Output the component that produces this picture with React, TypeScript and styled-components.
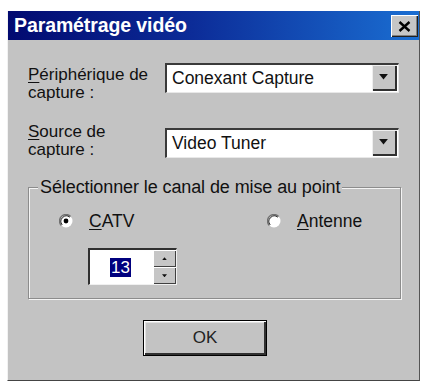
import React from "react";
import styled, { createGlobalStyle } from "styled-components";

const Global = createGlobalStyle`
  html, body { margin: 0; padding: 0; background: #ffffff; }
  body { font-family: "Liberation Sans", Arial, sans-serif; }
`;

const Win = styled.div`
  box-sizing: border-box;
  margin: 11px 0 0 7px;
  width: 413px;
  height: 370px;
  background: #c3c3c3;
  border-left: 1px solid #f2f2f2;
  border-right: 1px solid #555;
  border-bottom: 1px solid #444;
  display: flex;
  flex-direction: column;
`;

const TitleBar = styled.div`
  height: 29px;
  background: linear-gradient(to right, #020a70 0%, #0c2c98 45%, #1a6ed2 100%);
  display: flex;
  align-items: center;
  justify-content: space-between;
  padding: 0 1px 0 6px;
`;

const Title = styled.span`
  color: #fff;
  font-weight: bold;
  font-size: 19.5px;
  letter-spacing: -0.1px;
`;

const CloseBtn = styled.div`
  box-sizing: border-box;
  width: 27px;
  height: 22px;
  margin-top: 1px;
  background: #c6c6c6;
  box-shadow: inset 1px 1px 0 #fff, inset -1px -1px 0 #202020, inset -2px -2px 0 #808080;
  display: flex;
  align-items: center;
  justify-content: center;
`;

const Body = styled.div`
  flex: 1;
  padding: 23px 18px 0 20px;
  display: flex;
  flex-direction: column;
`;

const Row = styled.div<{ $mt?: number }>`
  display: flex;
  align-items: flex-start;
  margin-top: ${(p) => p.$mt ?? 0}px;
`;

const Label = styled.div<{ $mt?: number }>`
  width: 137px;
  margin-top: ${(p) => p.$mt ?? 0}px;
  font-size: 17px;
  line-height: 18px;
  color: #111;
`;

const U = styled.span`
  text-decoration: underline;
  text-underline-offset: 2px;
`;

const Combo = styled.div<{ $mt?: number }>`
  box-sizing: border-box;
  margin-top: ${(p) => p.$mt ?? 0}px;
  width: 234px;
  height: 30px;
  background: #fff;
  border-top: 2px solid #3a3a3a;
  border-left: 2px solid #3a3a3a;
  border-right: 1px solid #e8e8e8;
  border-bottom: 1px solid #e8e8e8;
  display: flex;
  align-items: center;
  justify-content: space-between;
  padding: 0 1px 1px 5px;
`;

const ComboText = styled.span`
  font-size: 17.5px;
  color: #111;
`;

const DropBtn = styled.div`
  box-sizing: border-box;
  width: 25px;
  height: 26px;
  background: #c6c6c6;
  box-shadow: inset 1px 1px 0 #eee, inset -2px -2px 0 #303030;
  display: flex;
  align-items: center;
  justify-content: center;
  padding: 0 2px 2px 0;
`;

const Group = styled.fieldset`
  margin: 18px 0 0 0;
  padding: 14px 0 13px 0;
  border: 1px solid #8c8c8c;
  box-shadow: inset 1px 1px 0 #f4f4f4, 1px 1px 0 #f4f4f4;
  min-width: 0;
`;

const Legend = styled.legend`
  margin-left: 9px;
  padding: 0 2px;
  font-size: 18px;
  line-height: 20px;
  color: #111;
  background: #c3c3c3;
  letter-spacing: -0.1px;
`;

const GroupInner = styled.div`
  padding-left: 30px;
  display: flex;
  flex-direction: column;
`;

const RadioRow = styled.div`
  display: flex;
  align-items: center;
  height: 20px;
`;

const Radio = styled.div<{ $w?: number }>`
  display: flex;
  align-items: center;
  gap: 16px;
  width: ${(p) => (p.$w ? `${p.$w}px` : "auto")};
  font-size: 17.5px;
  color: #111;
`;

const Spin = styled.div`
  box-sizing: border-box;
  margin: 17px 0 0 29px;
  width: 89px;
  height: 37px;
  background: #fff;
  border-top: 2px solid #303030;
  border-left: 2px solid #303030;
  border-right: 1px solid #f0f0f0;
  border-bottom: 1px solid #f0f0f0;
  display: flex;
  align-items: stretch;
`;

const SpinField = styled.div`
  flex: 1;
  display: flex;
  align-items: center;
  padding-left: 20px;
`;

const Sel = styled.span`
  background: #00007e;
  color: #fff;
  font-size: 17px;
  line-height: 19px;
  padding: 0 1px;
`;

const SpinBtns = styled.div`
  width: 23px;
  display: flex;
  flex-direction: column;
`;

const SpinBtn = styled.div`
  flex: 1;
  background: #c6c6c6;
  box-shadow: inset 1px 1px 0 #fff, inset -1px -1px 0 #404040;
  display: flex;
  align-items: center;
  justify-content: center;
`;

const BtnRow = styled.div`
  display: flex;
  margin-top: 21px;
  padding-left: 115px;
`;

const OkBtn = styled.div`
  box-sizing: border-box;
  width: 124px;
  height: 36px;
  border: 1px solid #000;
  background: #c3c3c3;
  box-shadow: inset 1px 1px 0 #fff, inset -2px -2px 0 #303030, inset 2px 2px 0 #e0e0e0;
  display: flex;
  align-items: center;
  justify-content: center;
  font-size: 17px;
  color: #222;
`;

const Arrow = ({ up, size = 9 }: { up?: boolean; size?: number }) => (
  <svg width={size} height={size / 2 + 1} viewBox="0 0 8 5">
    {up ? <polygon points="0,5 8,5 4,0" fill="#111" /> : <polygon points="0,0 8,0 4,5" fill="#111" />}
  </svg>
);

const RadioIcon = ({ checked }: { checked?: boolean }) => (
  <svg width="14" height="14" viewBox="0 0 14 14">
    <circle cx="7" cy="7" r="6.5" fill="#fff" />
    <path d="M2.4 11.6 A6.5 6.5 0 0 1 11.6 2.4" stroke="#707070" strokeWidth="1.4" fill="none" />
    <path d="M3.2 10.8 A5.4 5.4 0 0 1 10.8 3.2" stroke="#202020" strokeWidth="1" fill="none" />
    {checked && <circle cx="7" cy="7" r="2.4" fill="#000" />}
  </svg>
);

export default function App() {
  return (
    <>
      <Global />
      <Win>
        <TitleBar>
          <Title>Paramétrage vidéo</Title>
          <CloseBtn>
            <svg width="13" height="11" viewBox="0 0 13 11">
              <path d="M1.5 1 L11.5 10 M11.5 1 L1.5 10" stroke="#000" strokeWidth="2.4" />
            </svg>
          </CloseBtn>
        </TitleBar>
        <Body>
          <Row>
            <Label $mt={3}>
              <U>P</U>ériphérique de
              <br />
              capture :
            </Label>
            <Combo>
              <ComboText>Conexant Capture</ComboText>
              <DropBtn>
                <Arrow />
              </DropBtn>
            </Combo>
          </Row>
          <Row $mt={21}>
            <Label>
              <U>S</U>ource de
              <br />
              capture :
            </Label>
            <Combo $mt={5}>
              <ComboText>Video Tuner</ComboText>
              <DropBtn>
                <Arrow />
              </DropBtn>
            </Combo>
          </Row>
          <Group>
            <Legend>Sélectionner le canal de mise au point</Legend>
            <GroupInner>
              <RadioRow>
                <Radio $w={208}>
                  <RadioIcon checked />
                  <span>
                    <U>C</U>ATV
                  </span>
                </Radio>
                <Radio>
                  <RadioIcon />
                  <span>
                    <U>A</U>ntenne
                  </span>
                </Radio>
              </RadioRow>
              <Spin>
                <SpinField>
                  <Sel>13</Sel>
                </SpinField>
                <SpinBtns>
                  <SpinBtn>
                    <Arrow up size={5} />
                  </SpinBtn>
                  <SpinBtn>
                    <Arrow size={5} />
                  </SpinBtn>
                </SpinBtns>
              </Spin>
            </GroupInner>
          </Group>
          <BtnRow>
            <OkBtn>OK</OkBtn>
          </BtnRow>
        </Body>
      </Win>
    </>
  );
}
